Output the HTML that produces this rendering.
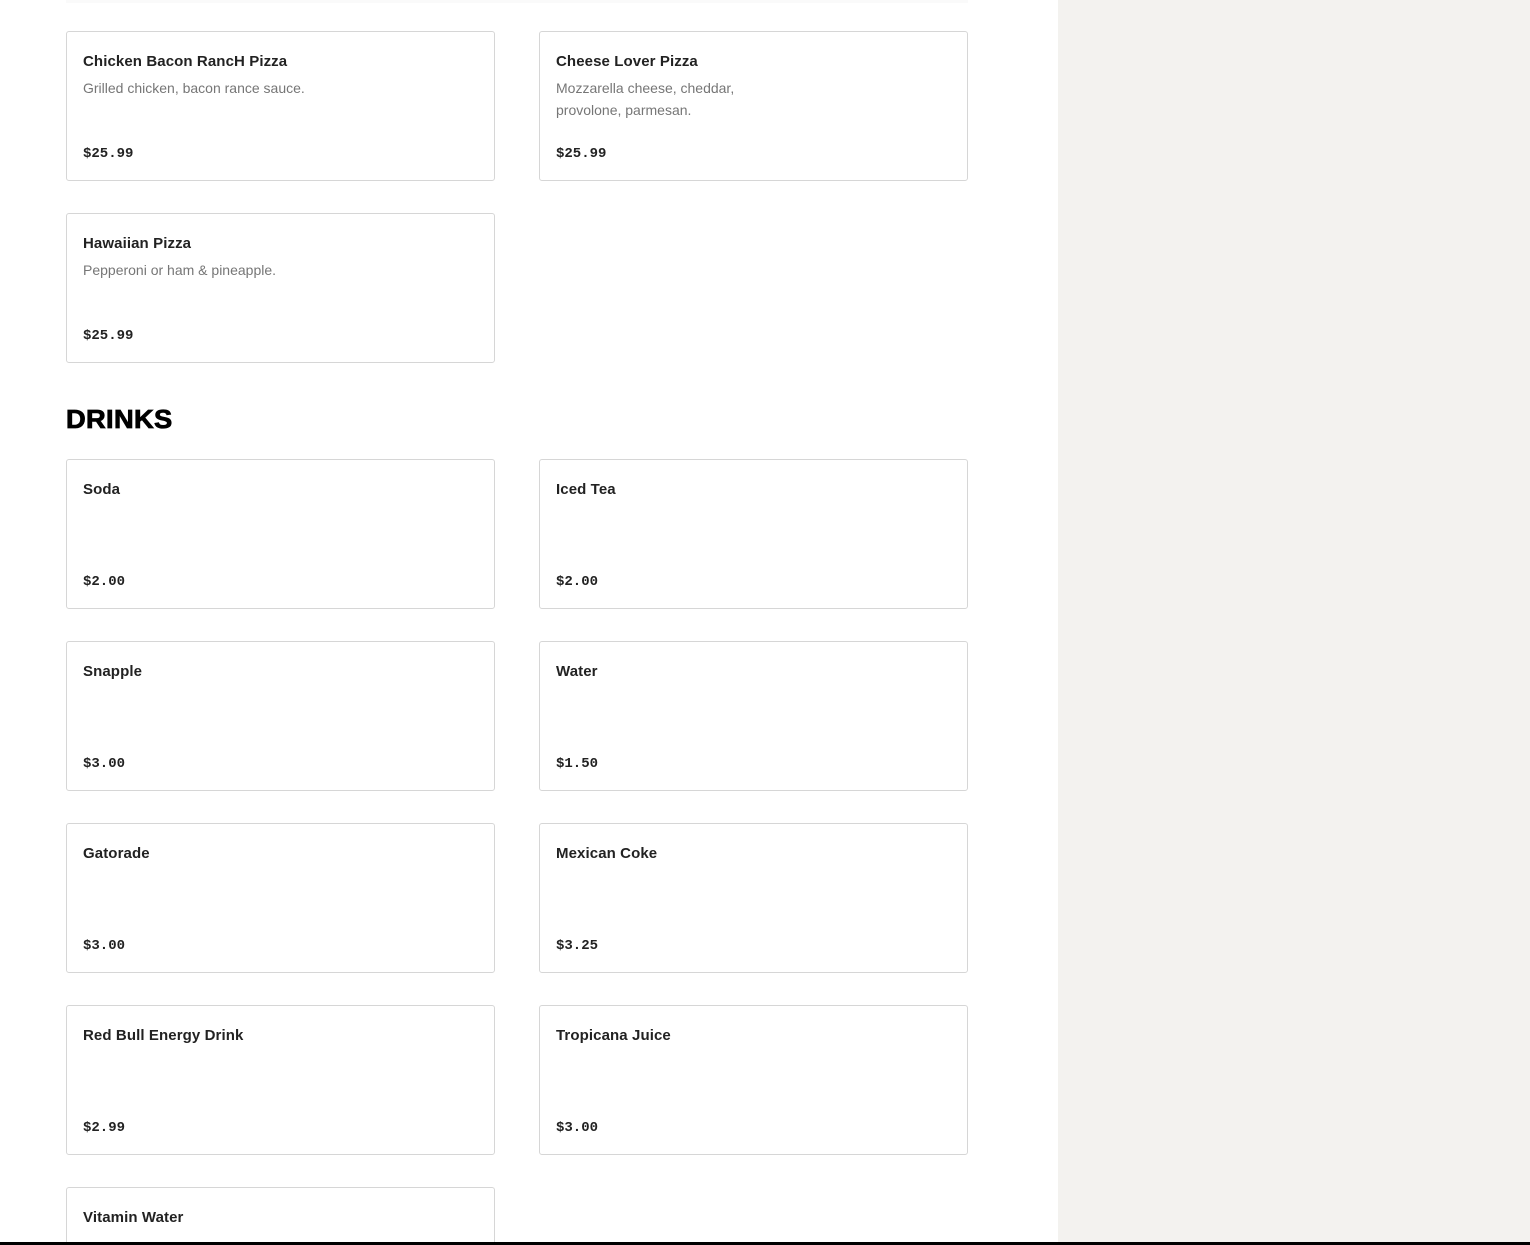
<!DOCTYPE html>
<html style="width:1530px;height:1245px;overflow:hidden"><head><meta charset="utf-8"><style>
*{margin:0;padding:0;box-sizing:border-box}
body{width:1530px;height:1245px;overflow:hidden;background:#fff;position:relative;font-family:"Liberation Sans",sans-serif;color:#1f1f1f}
.side{position:absolute;left:1058px;top:0;width:472px;height:1245px;background:#f3f2ef}
.card{position:absolute;width:429px;height:150px;border:1px solid #d6d6d6;border-radius:3px;background:#fff}
.card.last{height:60px;border-bottom:none;border-radius:3px 3px 0 0}
.t{position:absolute;left:16px;top:21px;font-size:15px;font-weight:bold;color:#222;letter-spacing:0.1px}
.d{position:absolute;left:16px;top:45px;font-size:14px;color:#767676;line-height:22px;width:210px}
.d.w{width:320px}
.p{position:absolute;left:16px;top:114px;font-family:"Liberation Mono",monospace;font-weight:bold;font-size:14px;color:#222}
h2{position:absolute;left:66px;top:404px;font-size:26px;font-weight:900;color:#000;letter-spacing:0.3px;-webkit-text-stroke:0.8px #000;transform:scaleX(1.05);transform-origin:left}
.bar{position:absolute;left:0;top:1242px;width:1530px;height:3px;background:#000}
.top{position:absolute;left:66px;top:0;width:902px;height:3px;background:#fafafa}
</style></head><body>
<div class="side"></div>
<div class="top"></div>
<div class="card" style="left:66px;top:31px"><div class="t">Chicken Bacon RancH Pizza</div><div class="d w">Grilled chicken, bacon rance sauce.</div><div class="p">$25.99</div></div>
<div class="card" style="left:539px;top:31px"><div class="t">Cheese Lover Pizza</div><div class="d">Mozzarella cheese, cheddar, provolone, parmesan.</div><div class="p">$25.99</div></div>
<div class="card" style="left:66px;top:213px"><div class="t">Hawaiian Pizza</div><div class="d w">Pepperoni or ham &amp; pineapple.</div><div class="p">$25.99</div></div>
<h2>DRINKS</h2>
<div class="card" style="left:66px;top:459px"><div class="t">Soda</div><div class="p">$2.00</div></div>
<div class="card" style="left:539px;top:459px"><div class="t">Iced Tea</div><div class="p">$2.00</div></div>
<div class="card" style="left:66px;top:641px"><div class="t">Snapple</div><div class="p">$3.00</div></div>
<div class="card" style="left:539px;top:641px"><div class="t">Water</div><div class="p">$1.50</div></div>
<div class="card" style="left:66px;top:823px"><div class="t">Gatorade</div><div class="p">$3.00</div></div>
<div class="card" style="left:539px;top:823px"><div class="t">Mexican Coke</div><div class="p">$3.25</div></div>
<div class="card" style="left:66px;top:1005px"><div class="t">Red Bull Energy Drink</div><div class="p">$2.99</div></div>
<div class="card" style="left:539px;top:1005px"><div class="t">Tropicana Juice</div><div class="p">$3.00</div></div>
<div class="card last" style="left:66px;top:1187px"><div class="t">Vitamin Water</div></div>
<div class="bar"></div>
</body></html>
